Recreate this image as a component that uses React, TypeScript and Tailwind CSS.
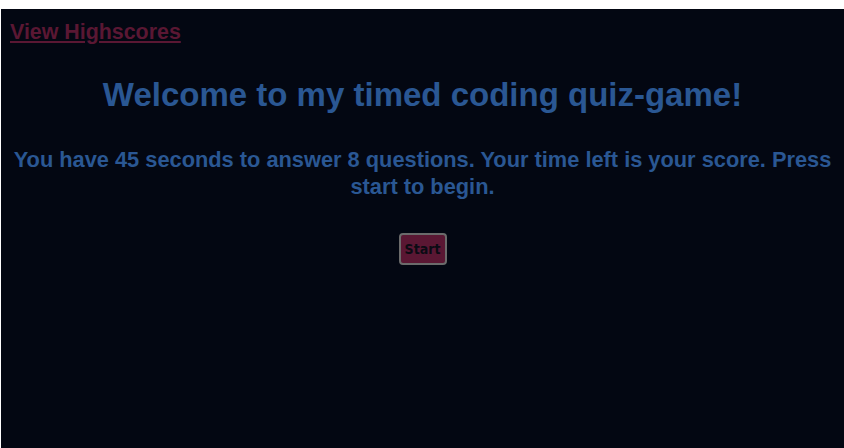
export default function App() {
  return (
    <div className="h-[448px] w-[844px] overflow-hidden bg-white pl-px pt-[9px]">
      <div
        className="h-full w-full bg-[#030712] text-center"
        style={{ fontFamily: '"Liberation Sans", Arial, sans-serif' }}
      >
        <div className="px-[9px] pt-[9px] text-left">
          <a href="#" className="text-[21.4px] font-bold leading-[28px] text-[#5a1733] underline">
            View Highscores
          </a>
        </div>
        <h1 className="mt-[29px] text-[33px] font-bold leading-[40px] text-[#2a5793]">
          Welcome to my timed coding quiz-game!
        </h1>
        <p className="mx-auto mt-[31px] px-[8px] text-[21.8px] font-bold leading-[27px] text-[#2a5793]">
          You have 45 seconds to answer 8 questions. Your time left is your score. Press start to begin.
        </p>
        <button
          type="button"
          className="mt-[33px] h-[32px] w-[48px] rounded-[4px] border-2 border-[#6b6b6b] bg-[#5a1733] text-[14px] font-bold text-[#0b0b14]"
          style={{ fontFamily: '"Liberation Sans Narrow", "DejaVu Sans Condensed", sans-serif' }}
        >
          Start
        </button>
      </div>
    </div>
  );
}
